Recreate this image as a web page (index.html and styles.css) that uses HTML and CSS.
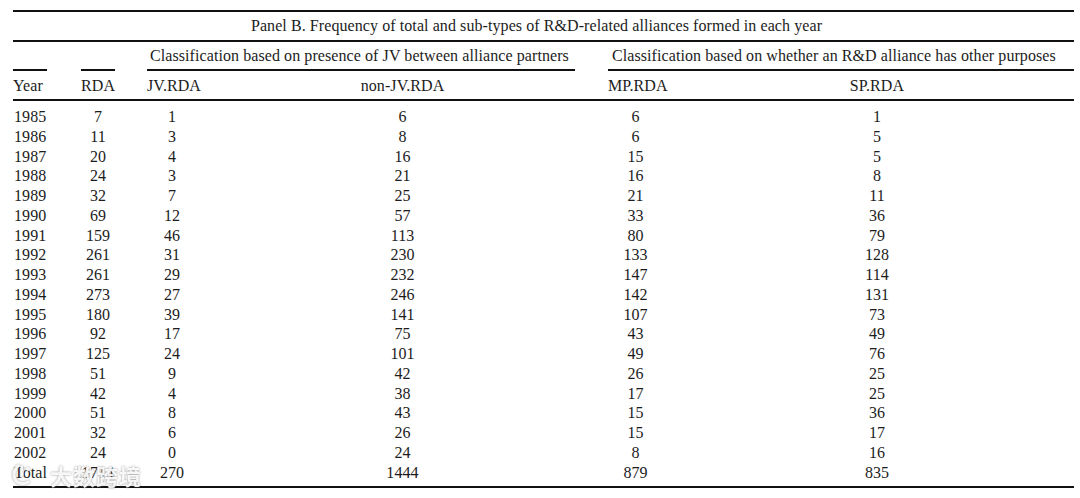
FILE: index.html
```html
<!DOCTYPE html>
<html>
<head>
<meta charset="utf-8">
<link rel="stylesheet" href="styles.css">
</head>
<body>
<div class="page">
  <div class="tbl">
    <div class="title">Panel B. Frequency of total and sub-types of R&amp;D-related alliances formed in each year</div>
    <div class="row cls">
      <div class="c1 rule"></div>
      <div class="c2 rule"></div>
      <div class="grpA rule">Classification based on presence of JV between alliance partners</div>
      <div class="grpB rule">Classification based on whether an R&amp;D alliance has other purposes</div>
    </div>
    <div class="row head">
      <div class="c1">Year</div>
      <div class="c2 ctr">RDA</div>
      <div class="c3">JV.RDA</div>
      <div class="c4 ctr">non-JV.RDA</div>
      <div class="c5">MP.RDA</div>
      <div class="c6 ctr">SP.RDA</div>
    </div>
    <div class="body">
      <div class="row data"><div class="c1">1985</div><div class="c2 ctr">7</div><div class="c3 ctr">1</div><div class="c4 ctr">6</div><div class="c5 ctr">6</div><div class="c6 ctr">1</div></div>
      <div class="row data"><div class="c1">1986</div><div class="c2 ctr">11</div><div class="c3 ctr">3</div><div class="c4 ctr">8</div><div class="c5 ctr">6</div><div class="c6 ctr">5</div></div>
      <div class="row data"><div class="c1">1987</div><div class="c2 ctr">20</div><div class="c3 ctr">4</div><div class="c4 ctr">16</div><div class="c5 ctr">15</div><div class="c6 ctr">5</div></div>
      <div class="row data"><div class="c1">1988</div><div class="c2 ctr">24</div><div class="c3 ctr">3</div><div class="c4 ctr">21</div><div class="c5 ctr">16</div><div class="c6 ctr">8</div></div>
      <div class="row data"><div class="c1">1989</div><div class="c2 ctr">32</div><div class="c3 ctr">7</div><div class="c4 ctr">25</div><div class="c5 ctr">21</div><div class="c6 ctr">11</div></div>
      <div class="row data"><div class="c1">1990</div><div class="c2 ctr">69</div><div class="c3 ctr">12</div><div class="c4 ctr">57</div><div class="c5 ctr">33</div><div class="c6 ctr">36</div></div>
      <div class="row data"><div class="c1">1991</div><div class="c2 ctr">159</div><div class="c3 ctr">46</div><div class="c4 ctr">113</div><div class="c5 ctr">80</div><div class="c6 ctr">79</div></div>
      <div class="row data"><div class="c1">1992</div><div class="c2 ctr">261</div><div class="c3 ctr">31</div><div class="c4 ctr">230</div><div class="c5 ctr">133</div><div class="c6 ctr">128</div></div>
      <div class="row data"><div class="c1">1993</div><div class="c2 ctr">261</div><div class="c3 ctr">29</div><div class="c4 ctr">232</div><div class="c5 ctr">147</div><div class="c6 ctr">114</div></div>
      <div class="row data"><div class="c1">1994</div><div class="c2 ctr">273</div><div class="c3 ctr">27</div><div class="c4 ctr">246</div><div class="c5 ctr">142</div><div class="c6 ctr">131</div></div>
      <div class="row data"><div class="c1">1995</div><div class="c2 ctr">180</div><div class="c3 ctr">39</div><div class="c4 ctr">141</div><div class="c5 ctr">107</div><div class="c6 ctr">73</div></div>
      <div class="row data"><div class="c1">1996</div><div class="c2 ctr">92</div><div class="c3 ctr">17</div><div class="c4 ctr">75</div><div class="c5 ctr">43</div><div class="c6 ctr">49</div></div>
      <div class="row data"><div class="c1">1997</div><div class="c2 ctr">125</div><div class="c3 ctr">24</div><div class="c4 ctr">101</div><div class="c5 ctr">49</div><div class="c6 ctr">76</div></div>
      <div class="row data"><div class="c1">1998</div><div class="c2 ctr">51</div><div class="c3 ctr">9</div><div class="c4 ctr">42</div><div class="c5 ctr">26</div><div class="c6 ctr">25</div></div>
      <div class="row data"><div class="c1">1999</div><div class="c2 ctr">42</div><div class="c3 ctr">4</div><div class="c4 ctr">38</div><div class="c5 ctr">17</div><div class="c6 ctr">25</div></div>
      <div class="row data"><div class="c1">2000</div><div class="c2 ctr">51</div><div class="c3 ctr">8</div><div class="c4 ctr">43</div><div class="c5 ctr">15</div><div class="c6 ctr">36</div></div>
      <div class="row data"><div class="c1">2001</div><div class="c2 ctr">32</div><div class="c3 ctr">6</div><div class="c4 ctr">26</div><div class="c5 ctr">15</div><div class="c6 ctr">17</div></div>
      <div class="row data"><div class="c1">2002</div><div class="c2 ctr">24</div><div class="c3 ctr">0</div><div class="c4 ctr">24</div><div class="c5 ctr">8</div><div class="c6 ctr">16</div></div>
      <div class="row data"><div class="c1">Total</div><div class="c2 ctr">1714</div><div class="c3 ctr">270</div><div class="c4 ctr">1444</div><div class="c5 ctr">879</div><div class="c6 ctr">835</div></div>
    </div>
  </div>
  <div class="watermark">
    <svg class="wm-logo" width="22" height="24" viewBox="0 0 22 24"><path d="M6 3 C2 6 1 12 3 16 C5 21 12 22 16 19" fill="none" stroke="#fff" stroke-width="3.2" stroke-linecap="round"/><path d="M10 4 L10 12" stroke="#fff" stroke-width="3.2" stroke-linecap="round"/><circle cx="16" cy="6" r="2" fill="#fff"/></svg>
    <span class="wm-text">大数跨境</span>
  </div>
</div>
</body>
</html>
```

FILE: styles.css
```css
html, body {
  margin: 0;
  padding: 0;
  background: #fff;
}
.page {
  position: relative;
  width: 1080px;
  height: 498px;
  padding: 10px 0 0 13px;
  box-sizing: border-box;
  font-family: "Liberation Serif", "Times New Roman", serif;
  font-size: 16px;
  letter-spacing: 0.08px;
  color: #1c1c1c;
}
.tbl {
  width: 1061px;
  border-top: 2px solid #111;
  border-bottom: 2px solid #111;
}
.title {
  height: 28px;
  line-height: 28px;
  text-align: center;
  padding-right: 14px;
  border-bottom: 2px solid #111;
}
.row {
  display: grid;
  grid-template-columns: 34px 34px 34px 32px 50px 378px 33px 55px 411px;
}
.cls {
  height: 29px;
}
.cls > div {
  line-height: 27px;
  white-space: nowrap;
}
.rule {
  border-bottom: 2px solid #111;
}
.c1 { grid-column: 1; white-space: nowrap; }
.c2 { grid-column: 3; }
.c3 { grid-column: 5; white-space: nowrap; }
.c4 { grid-column: 6; padding-left: 33px; }
.c5 { grid-column: 8; white-space: nowrap; }
.c6 { grid-column: 9; padding-left: 17px; }
.grpA { grid-column: 5 / span 2; padding-left: 3px; }
.grpB { grid-column: 8 / span 2; padding-left: 4px; }
.ctr { text-align: center; }
.head {
  height: 28px;
  line-height: 29px;
  border-bottom: 2px solid #111;
}
.body {
  padding: 6px 0 3px;
}
.data {
  height: 19.78px;
  line-height: 19.78px;
}
.data .c1 { padding-left: 1px; }
.watermark {
  position: absolute;
  left: 12px;
  top: 462px;
  display: flex;
  align-items: center;
  gap: 16px;
  filter: drop-shadow(0 0 1px rgba(90,90,90,0.7));
}
.wm-text {
  font-family: "Noto Sans CJK SC", sans-serif;
  font-size: 22px;
  font-weight: 700;
  color: rgba(255,255,255,0.9);
  letter-spacing: 1px;
  line-height: 26px;
}
.wm-logo { opacity: 0.9; }
```
